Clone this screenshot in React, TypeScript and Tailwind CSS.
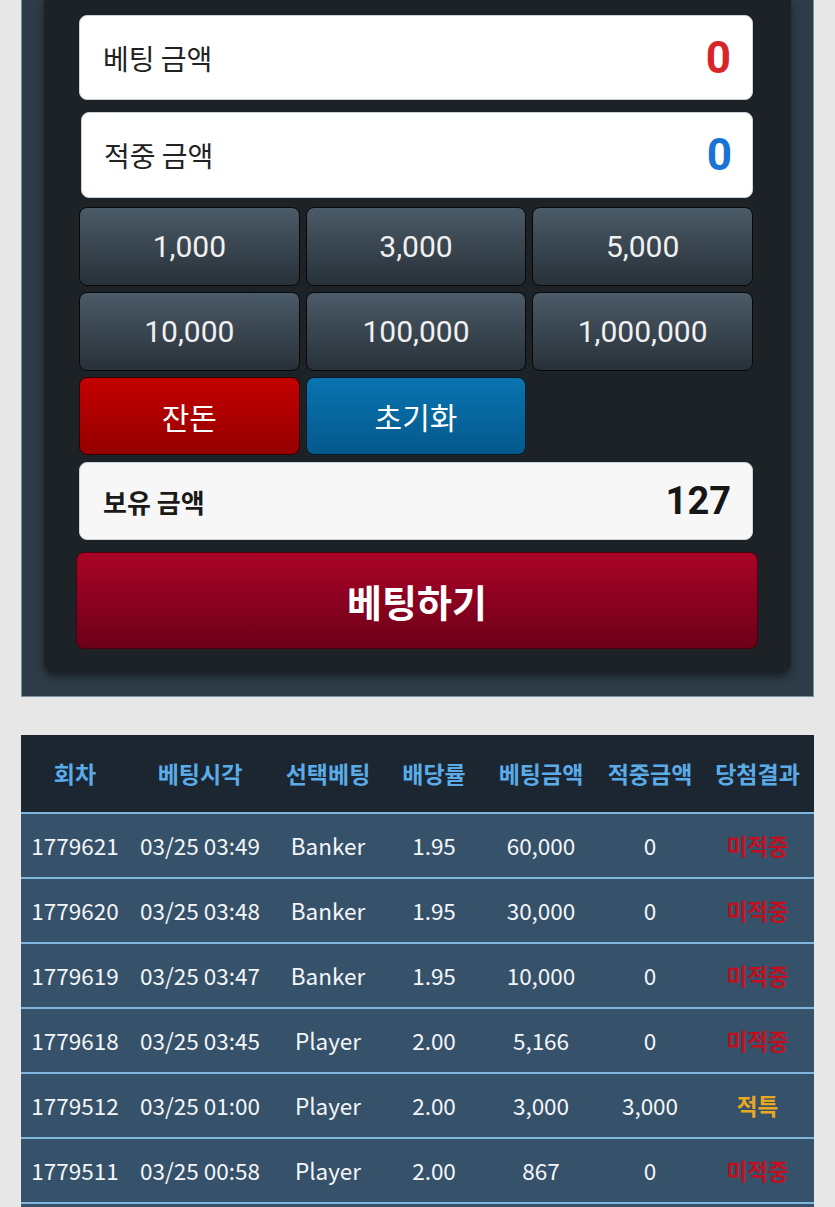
import React from "react";

const rows = [
  { id: "1779621", time: "03/25 03:49", pick: "Banker", odds: "1.95", bet: "60,000", win: "0", res: "미적중" },
  { id: "1779620", time: "03/25 03:48", pick: "Banker", odds: "1.95", bet: "30,000", win: "0", res: "미적중" },
  { id: "1779619", time: "03/25 03:47", pick: "Banker", odds: "1.95", bet: "10,000", win: "0", res: "미적중" },
  { id: "1779618", time: "03/25 03:45", pick: "Player", odds: "2.00", bet: "5,166", win: "0", res: "미적중" },
  { id: "1779512", time: "03/25 01:00", pick: "Player", odds: "2.00", bet: "3,000", win: "3,000", res: "적특" },
  { id: "1779511", time: "03/25 00:58", pick: "Player", odds: "2.00", bet: "867", win: "0", res: "미적중" },
];

const headers = ["회차", "베팅시각", "선택베팅", "배당률", "베팅금액", "적중금액", "당첨결과"];

const chip = ["1,000", "3,000", "5,000", "10,000", "100,000", "1,000,000"];

export default function App() {
  const kr = { fontFamily: '"Noto Sans CJK KR", "Noto Sans", sans-serif' };
  const rb = { fontFamily: 'Roboto, "Noto Sans CJK KR", sans-serif' };
  return (
    <div className="min-h-screen bg-[#e7e7e7] overflow-hidden" style={kr}>
      {/* top panel */}
      <div className="ml-[21px] w-[793px] bg-[#2e3c47] border-x border-b border-[#7f909d] px-[22px] pb-[23px]">
        <div className="bg-[#1c2226] rounded-b-[10px] shadow-[0_4px_8px_rgba(0,0,0,0.45)] pt-[15px] pb-[24px] pl-[35px] pr-[38px] flex flex-col">
          <div className="h-[85px] bg-white rounded-[8px] border border-[#c9d3dc] flex items-center justify-between pl-[23px] pr-[21px]">
            <span className="text-[28px] text-[#222]" style={kr}>베팅 금액</span>
            <span className="text-[44px] font-bold text-[#d6262a] leading-none" style={rb}>0</span>
          </div>
          <div className="mt-[12px] ml-[2px] h-[86px] bg-white rounded-[8px] border border-[#c9d3dc] flex items-center justify-between pl-[22px] pr-[20px]">
            <span className="text-[28px] text-[#222]" style={kr}>적중 금액</span>
            <span className="text-[44px] font-bold text-[#1a73d4] leading-none" style={rb}>0</span>
          </div>
          <div className="mt-[9px] grid grid-cols-3 gap-x-[6px] gap-y-[6px]">
            {chip.map((c) => (
              <div
                key={c}
                className="h-[79px] rounded-[8px] border border-[#06080a] bg-gradient-to-b from-[#4b5b68] to-[#283139] flex items-center justify-center text-[30px] text-[#f1f1f1]"
                style={rb}
              >
                {c}
              </div>
            ))}
            <div className="h-[78px] rounded-[8px] border border-[#2a0000] bg-gradient-to-b from-[#c40000] to-[#950000] flex items-center justify-center text-[30px] text-white" style={kr}>
              잔돈
            </div>
            <div className="h-[78px] rounded-[8px] border border-[#021a2b] bg-gradient-to-b from-[#0a74b0] to-[#04598c] flex items-center justify-center text-[30px] text-white" style={kr}>
              초기화
            </div>
            <div />
          </div>
          <div className="mt-[7px] h-[78px] bg-[#f7f7f7] rounded-[8px] border border-[#c9d3dc] flex items-center justify-between pl-[23px] pr-[21px]">
            <span className="text-[26px] font-bold text-[#1a1a1a]" style={kr}>보유 금액</span>
            <span className="text-[38px] font-bold text-[#161616] leading-none" style={rb}>127</span>
          </div>
          <div className="mt-[12px] -ml-[3px] -mr-[5px] h-[97px] rounded-[8px] border border-[#4a0010] bg-gradient-to-b from-[#aa0427] to-[#6d0019] flex items-center justify-center">
            <span className="text-[38px] font-bold text-white" style={kr}>베팅하기</span>
          </div>
        </div>
      </div>

      {/* table */}
      <div className="ml-[21px] mt-[38px] w-[793px]">
        <div className="grid grid-cols-[108px_142px_114px_98px_116px_102px_113px] h-[77px] bg-[#1b2630] items-center">
          {headers.map((h) => (
            <div key={h} className="text-center text-[23px] font-bold text-[#5aabe8]" style={kr}>
              {h}
            </div>
          ))}
        </div>
        {rows.map((r) => (
          <div
            key={r.id}
            className="grid grid-cols-[108px_142px_114px_98px_116px_102px_113px] h-[65px] bg-[#36516a] border-t-2 border-[#80b5dc] items-center text-[22.5px] text-[#f4f6f8]"
          >
            <div className="text-center">{r.id}</div>
            <div className="text-center">{r.time}</div>
            <div className="text-center">{r.pick}</div>
            <div className="text-center">{r.odds}</div>
            <div className="text-center">{r.bet}</div>
            <div className="text-center">{r.win}</div>
            <div className={"text-center font-semibold " + (r.res === "적특" ? "text-[#e8a820]" : "text-[#c20f1e]")}>{r.res}</div>
          </div>
        ))}
        <div className="h-[20px] bg-[#36516a] border-t-2 border-[#80b5dc]" />
      </div>
    </div>
  );
}
